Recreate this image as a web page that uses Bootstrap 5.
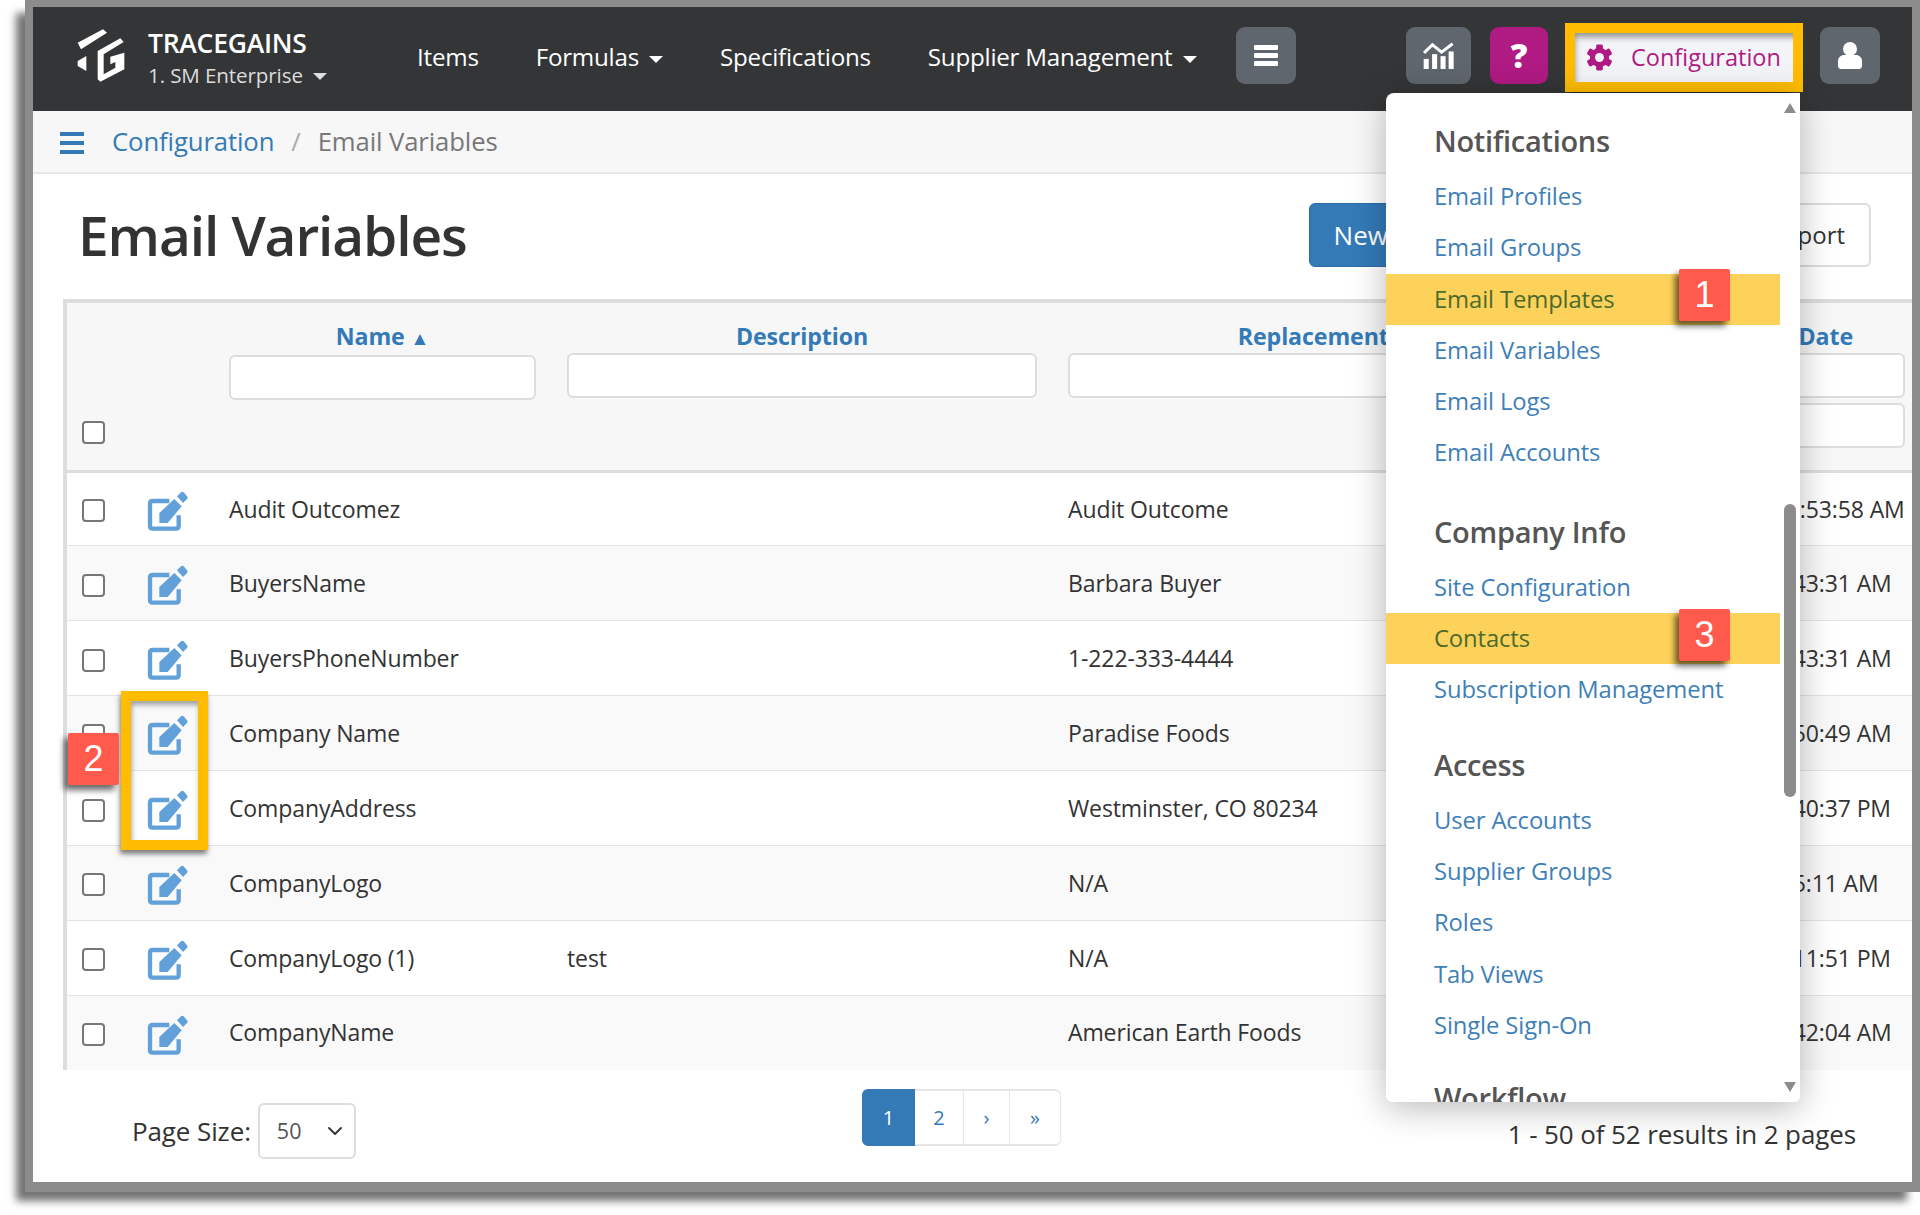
<!DOCTYPE html>
<html lang="en">
<head>
<meta charset="utf-8">
<title>Email Variables</title>
<link href="https://cdn.jsdelivr.net/npm/bootstrap@5.3.0/dist/css/bootstrap.min.css" rel="stylesheet">
<style>
html,body{margin:0;background:#fff;}
body{font-family:"Open Sans","Noto Sans",sans-serif;font-size:23px;letter-spacing:-.005em;color:#333;height:1215px;overflow:hidden;}
a{text-decoration:none;color:#337ab7;}
.shot-frame{margin-left:25px;height:1192px;padding:7px 8px 10px 8px;background:#8c8c8c;box-shadow:-11px 11px 8px -2px rgba(0,0,0,.55);}
.shot-page{position:relative;height:1175px;background:#fff;overflow:hidden;}
.top-bar{height:104px;background:#333537;padding:0 32px 0 41px;flex-wrap:nowrap;align-items:flex-start;}
.logo-mark{width:54px;height:55px;margin-top:21px;flex:none;}
.brand-box{margin-left:20px;margin-top:20px;color:#fff;width:200px;}
.brand-name{font-size:26.5px;font-weight:600;line-height:33px;letter-spacing:-.01em;}
.brand-sub{font-size:20.6px;line-height:30px;color:#ddd;font-weight:400;white-space:nowrap;}
.caret-dn{display:inline-block;width:0;height:0;border-left:7px solid transparent;border-right:7px solid transparent;border-top:7px solid currentColor;margin-left:10px;vertical-align:3px;}
.top-nav{margin-left:69px;margin-top:31px;gap:57px;flex-wrap:nowrap;}
.top-nav .nav-link{padding:0;color:#fff;font-size:24.2px;line-height:38px;white-space:nowrap;letter-spacing:-.01em;}
.tool-btn{width:60px;height:57px;margin-top:20px;border-radius:9px;background:#5f666d;border:0;padding:0;display:flex;align-items:center;justify-content:center;flex:none;}
.tool-menu{margin-left:39px;}
.tool-chart{width:65px;margin-left:auto;}
.tool-help{width:58px;margin-left:19px;background:#b01a83;color:#fff;font-weight:800;font-size:33px;line-height:1;}
.tool-config{width:218px;height:49px;margin-top:26px;margin-left:27px;background:#f3f4f8;border:0;border-radius:0;padding:0 0 0 11px;display:flex;align-items:center;color:#b01a83;font-size:23.5px;box-shadow:0 0 0 10px #ffbc00,-4px 14px 5px rgba(0,0,0,.45),inset 3px 7px 6px -3px rgba(0,0,0,.4);flex:none;}
.tool-config svg{margin-right:18px;flex:none;}
.tool-user{margin-left:27px;}
.crumb-bar{height:63px;background:#f7f7f7;border-bottom:2px solid #e7e7e7;padding:2px 0 0 27px;display:flex;align-items:center;}
.crumb-bars{width:24px;flex:none;margin-right:28px;}
.crumb-bars i{display:block;height:4px;background:#337ab7;margin-bottom:5px;}
.crumb-bars i:last-child{margin-bottom:0;}
.crumb-bar .breadcrumb{margin:0;font-size:25.7px;--bs-breadcrumb-divider-color:#aaa;--bs-breadcrumb-item-active-color:#777;--bs-breadcrumb-item-padding-x:17px;}
.title-row{height:125px;padding:0 41px 3px 45px;display:flex;align-items:center;justify-content:space-between;}
.page-title{font-size:55px;font-weight:600;margin:0;color:#333;letter-spacing:-.02em;}
.act-new,.act-rep{height:64px;font-size:24px;border-radius:6px;padding:0 24px;}
.act-new{background:#337ab7;border:1px solid #2e6da4;color:#fff;width:237px;text-align:left;font-size:26px;}
.act-rep{background:#fff;border:2px solid #ddd;color:#333;margin-left:200px;}
.grid-wrap{margin-left:30px;border-top:4px solid #ddd;border-left:4px solid #ddd;height:771px;overflow:hidden;}
.data-table{table-layout:fixed;width:1845px;margin:0;--bs-table-bg:transparent;font-size:23px;}
.data-table th,.data-table td{padding:0 19px 0 12px;border:0;vertical-align:middle;white-space:nowrap;overflow:hidden;}
.data-table thead tr{background:#f7f7f7;}
.data-table thead th{height:168px;border-bottom:3px solid #ddd;vertical-align:top;padding-top:16px;text-align:center;font-size:23.2px;font-weight:700;}
.data-table thead th a{display:block;line-height:34px;margin-bottom:0;}
.sort-mark{font-size:19px;}
.data-table tbody td{height:74.9px;border-bottom:1.5px solid #e4e4e4;color:#333;}
.data-table tbody tr:nth-child(even){background:#f9f9f9;}
.data-table td.date-cell{padding-right:0;}
.data-table thead th.date-col{padding-right:7px;}
.filter-in{display:block;width:100%;height:45px;border:2px solid #ddd;border-radius:6px;background:#fff;padding:0;margin-bottom:5px;}
.tick{width:23px;height:23px;border:2px solid #777;border-radius:4px;background:#fff;display:block;margin-left:3px;}
.data-table tbody .tick{margin-top:4px;}
.data-table thead th.head-tick{vertical-align:bottom;padding:0 0 26px 12px;}
.date-head{text-align:right;padding-right:52px;}
.edit-ico{width:60px;height:50px;display:block;margin:6px 0 0 -1px;}
.foot-row{height:112px;display:flex;font-size:26px;}
.size-box{width:829px;padding:33px 0 0 99px;display:flex;gap:7px;flex:none;}
.size-label{line-height:56px;}
.size-sel{width:98px;height:56px;font-size:21.5px;border:2px solid #ddd;border-radius:6px;padding:0 0 0 17px;color:#555;background-position:right 8px center;background-size:22px 16px;}
.foot-row .pagination{margin:19px 0 0;--bs-pagination-font-size:20px;}
.foot-row .page-link{height:57px;display:flex;align-items:center;justify-content:center;padding:0;color:#337ab7;border:2px solid #e6e6e6;border-left-width:1px;border-right-width:1px;}
.foot-row .page-item.active .page-link{background:#337ab7;border-color:#337ab7;color:#fff;}
.pw-a{width:53px;}.pw-b{width:50px;}.pw-c{width:47px;}.pw-d{width:52px;}
.foot-note{margin-left:auto;padding:45px 56px 0 0;white-space:nowrap;}
.cfg-menu{position:absolute;left:1353px;top:86px;width:414px;height:1009px;background:#fff;border-radius:8px 0 6px 6px;overflow:hidden;box-shadow:0 6px 34px rgba(0,0,0,.28);z-index:5;padding-top:23px;}
.menu-head{height:49px;line-height:49px;padding-left:48px;font-size:29px;font-weight:600;color:#555;margin:0 0 6px;letter-spacing:-.01em;}
.menu-head.gap-lg{margin-top:28px;}
.menu-head.gap-sm{margin-top:24px;}
.menu-head.gap-xs{margin-top:22px;}
.menu-item{display:block;height:51.3px;line-height:51.3px;padding-left:48px;margin-right:20px;font-size:23.8px;color:#3f7fb8;}
.menu-item.hl{background:#fdd25a;color:#4b6a2c;}
.sc-up,.sc-down{position:absolute;left:398px;width:0;height:0;border-left:6px solid transparent;border-right:6px solid transparent;}
.sc-up{top:10px;border-bottom:10px solid #8c8c8c;}
.sc-down{bottom:10px;border-top:10px solid #8c8c8c;}
.sc-thumb{position:absolute;left:398px;top:411px;width:12px;height:293px;background:#8c8c8c;border-radius:6px;}
.callout{position:absolute;width:51px;height:52px;background:#ff5a4c;color:#fff;border-radius:2px;display:flex;align-items:center;justify-content:center;font-family:"Liberation Sans",sans-serif;font-size:36px;letter-spacing:0;box-shadow:-4px 5px 6px rgba(0,0,0,.6);z-index:8;}
.call-a{left:1646px;top:262px;}
.call-b{left:35px;top:726px;}
.call-c{left:1646px;top:602px;}
.mark-box{position:absolute;left:88px;top:684px;width:87px;height:159px;border:10px solid #ffbc00;box-shadow:-1px 4px 5px rgba(0,0,0,.5),inset 1px 4px 5px rgba(0,0,0,.35);z-index:4;}
</style>
</head>
<body>
<div class="shot-frame">
<div class="shot-page">
  <nav class="navbar top-bar d-flex">
    <svg class="logo-mark" viewBox="48 26 148 165" aria-hidden="true"><path fill="#fff" d="M52 70 128 30 140 40 62 90ZM52 125 78 110V155L52 140ZM112 95 180 57 190 68 130 105V165L165 145V128L150 135V112L192 100V150L120 187 112 180Z"/></svg>
    <div class="brand-box">
      <div class="brand-name">TRACEGAINS</div>
      <div class="brand-sub">1. SM Enterprise<span class="caret-dn"></span></div>
    </div>
    <ul class="nav top-nav">
      <li class="nav-item"><a class="nav-link" href="#">Items</a></li>
      <li class="nav-item"><a class="nav-link" href="#">Formulas<span class="caret-dn"></span></a></li>
      <li class="nav-item"><a class="nav-link" href="#">Specifications</a></li>
      <li class="nav-item"><a class="nav-link" href="#">Supplier Management<span class="caret-dn"></span></a></li>
    </ul>
    <button class="btn tool-btn tool-menu" type="button" aria-label="Menu"><svg width="24" height="21" viewBox="0 0 24 21"><rect x="0" y="0" width="24" height="5" rx="1" fill="#fff"/><rect x="0" y="8" width="24" height="5" rx="1" fill="#fff"/><rect x="0" y="16" width="24" height="5" rx="1" fill="#fff"/></svg></button>
    <button class="btn tool-btn tool-chart" type="button" aria-label="Charts"><svg width="31" height="27" viewBox="0 0 92 80"><rect x="2" y="50" width="15" height="30" fill="#fff"/><rect x="27" y="36" width="15" height="44" fill="#fff"/><rect x="52" y="42" width="15" height="38" fill="#fff"/><rect x="76" y="28" width="15" height="52" fill="#fff"/><path d="M3 32 28 8 55 30 88 5" fill="none" stroke="#fff" stroke-width="9"/></svg></button>
    <button class="btn tool-btn tool-help" type="button">?</button>
    <button class="btn tool-config" type="button"><svg width="27" height="27" viewBox="0 0 28 28"><g fill="#b01a83"><rect x="10.5" y="0.5" width="7" height="27" rx="1.5"/><rect x="10.5" y="0.5" width="7" height="27" rx="1.5" transform="rotate(60 14 14)"/><rect x="10.5" y="0.5" width="7" height="27" rx="1.5" transform="rotate(120 14 14)"/><circle cx="14" cy="14" r="10"/></g><circle cx="14" cy="14" r="4.6" fill="#f3f4f8"/></svg>Configuration</button>
    <button class="btn tool-btn tool-user" type="button" aria-label="User"><svg width="24" height="27" viewBox="0 0 24 27"><circle cx="12" cy="7" r="7" fill="#fff"/><path fill="#fff" d="M0 24V19C0 15.5 3 13 6 13H18C21 13 24 15.5 24 19V24C24 25.5 23 27 21 27H3C1 27 0 25.5 0 24Z"/></svg></button>
  </nav>

  <div class="crumb-bar">
    <div class="crumb-bars"><i></i><i></i><i></i></div>
    <ol class="breadcrumb">
      <li class="breadcrumb-item"><a href="#">Configuration</a></li>
      <li class="breadcrumb-item active">Email Variables</li>
    </ol>
  </div>

  <div class="title-row">
    <h1 class="page-title">Email Variables</h1>
    <div class="d-flex">
      <button class="btn act-new" type="button">New</button>
      <button class="btn act-rep" type="button">Export</button>
    </div>
  </div>

  <div class="grid-wrap">
    <table class="table data-table">
      <colgroup><col style="width:63px"><col style="width:87px"><col style="width:338px"><col style="width:501px"><col style="width:592px"><col style="width:264px"></colgroup>
      <thead>
        <tr>
          <th class="head-tick"><span class="tick"></span></th>
          <th></th>
          <th><a href="#">Name <span class="sort-mark">▲</span></a><input class="filter-in" type="text" aria-label="Name"></th>
          <th><a href="#">Description</a><input class="filter-in" type="text" aria-label="Description"></th>
          <th><a href="#">Replacement Value</a><input class="filter-in" type="text" aria-label="Replacement"></th>
          <th class="date-col"><a class="date-head" href="#">Modified Date</a><input class="filter-in" type="text" aria-label="Date from"><input class="filter-in" type="text" aria-label="Date to"></th>
        </tr>
      </thead>
      <tbody id="rows"></tbody>
    </table>
  </div>

  <div class="foot-row">
    <div class="size-box"><span class="size-label">Page Size:</span><select class="form-select size-sel" aria-label="Page size"><option>50</option></select></div>
    <ul class="pagination">
      <li class="page-item active"><a class="page-link pw-a" href="#">1</a></li>
      <li class="page-item"><a class="page-link pw-b" href="#">2</a></li>
      <li class="page-item"><a class="page-link pw-c" href="#">›</a></li>
      <li class="page-item"><a class="page-link pw-d" href="#">»</a></li>
    </ul>
    <div class="foot-note">1 - 50 of 52 results in 2 pages</div>
  </div>

  <div class="cfg-menu">
    <h6 class="menu-head">Notifications</h6>
    <a class="menu-item" href="#">Email Profiles</a>
    <a class="menu-item" href="#">Email Groups</a>
    <a class="menu-item hl" href="#">Email Templates</a>
    <a class="menu-item" href="#">Email Variables</a>
    <a class="menu-item" href="#">Email Logs</a>
    <a class="menu-item" href="#">Email Accounts</a>
    <h6 class="menu-head gap-lg">Company Info</h6>
    <a class="menu-item" href="#">Site Configuration</a>
    <a class="menu-item hl" href="#">Contacts</a>
    <a class="menu-item" href="#">Subscription Management</a>
    <h6 class="menu-head gap-sm">Access</h6>
    <a class="menu-item" href="#">User Accounts</a>
    <a class="menu-item" href="#">Supplier Groups</a>
    <a class="menu-item" href="#">Roles</a>
    <a class="menu-item" href="#">Tab Views</a>
    <a class="menu-item" href="#">Single Sign-On</a>
    <h6 class="menu-head gap-xs">Workflow</h6>
    <span class="sc-up"></span><span class="sc-thumb"></span><span class="sc-down"></span>
  </div>

  <div class="callout call-a">1</div>
  <div class="callout call-b">2</div>
  <div class="callout call-c">3</div>
  <div class="mark-box"></div>
</div>
</div>
<script>
var data=[
["Audit Outcomez","","Audit Outcome","3/17/2021 10:53:58 AM"],
["BuyersName","","Barbara Buyer","3/17/2021 9:43:31 AM"],
["BuyersPhoneNumber","","1-222-333-4444","3/17/2021 9:43:31 AM"],
["Company Name","","Paradise Foods","3/17/2021 9:50:49 AM"],
["CompanyAddress","","Westminster, CO 80234","3/17/2021 9:40:37 PM"],
["CompanyLogo","","N/A","3/7/2021 9:05:11 AM"],
["CompanyLogo (1)","test","N/A","3/17/2021 9:11:51 PM"],
["CompanyName","","American Earth Foods","3/17/2021 9:42:04 AM"]];
var ico='<svg class="edit-ico" viewBox="0 0 180 150"><path d="M85 42H35Q27 42 27 50V117Q27 125 35 125H105Q113 125 113 117V85" fill="none" stroke="#62a0da" stroke-width="13"/><path fill="#62a0da" d="M55 108V78L100 36 122 58 80 108ZM108 28 120 16Q124 12 128 16L138 28Q142 32 138 36L126 48Z"/></svg>';
document.getElementById('rows').innerHTML=data.map(function(r){return '<tr><td><span class="tick"></span></td><td>'+ico+'</td><td>'+r[0]+'</td><td>'+r[1]+'</td><td>'+r[2]+'</td><td class="date-cell">'+r[3]+'</td></tr>';}).join('');
</script>
<script src="https://cdn.jsdelivr.net/npm/bootstrap@5.3.0/dist/js/bootstrap.bundle.min.js"></script>
</body>
</html>
